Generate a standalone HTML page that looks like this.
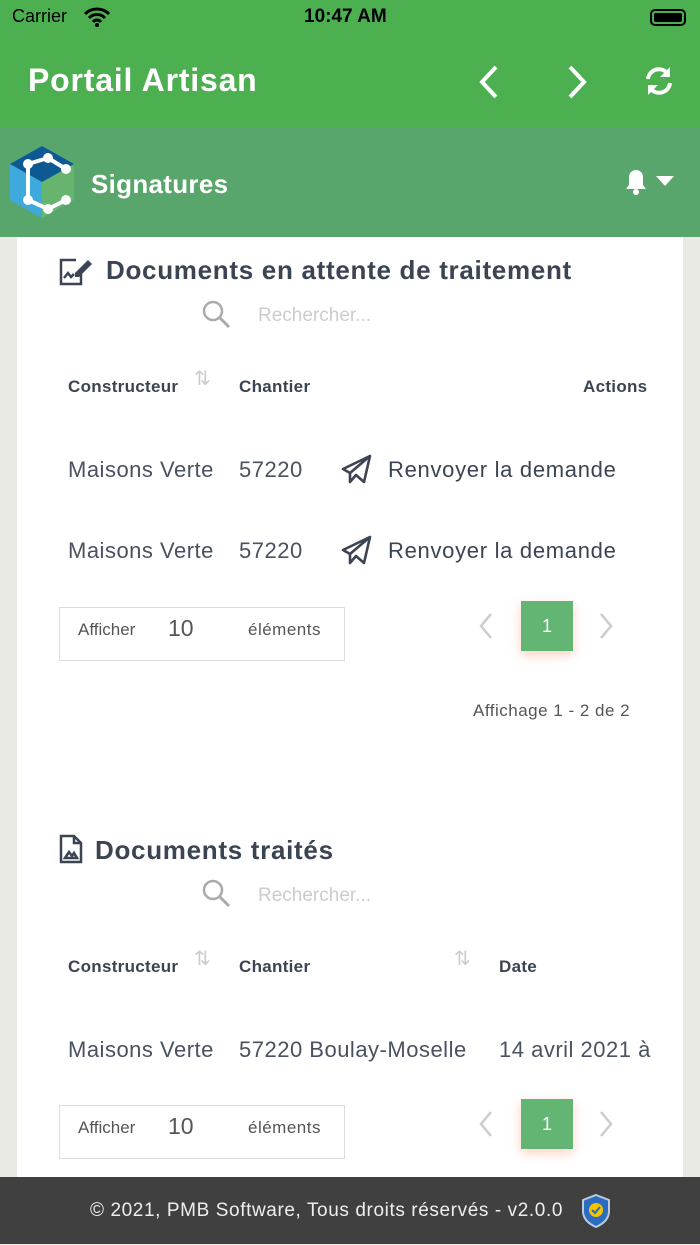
<!DOCTYPE html>
<html><head><meta charset="utf-8"><style>
*{margin:0;padding:0;box-sizing:border-box}
body{width:700px;height:1244px;overflow:hidden;position:relative;font-family:"Liberation Sans",sans-serif;background:#e9eae3;color:#3b4452}
.a{position:absolute;white-space:nowrap}
.hd{left:0;top:0;width:700px;height:128px;background:#4caf50}
.sub{left:0;top:128px;width:700px;height:109px;background:#58a66c}
.panel{left:17px;top:237px;width:666px;height:940px;background:#fff}
.th{font-size:17px;font-weight:bold;color:#3b4452;letter-spacing:0.3px}
.td{font-size:22px;color:#4a5160;letter-spacing:0.5px}
.box{border:1.5px solid #ddd;background:#fff}
.pg{width:52px;height:50px;background:#63b573;color:#fff;font-size:18px;text-align:center;line-height:50px;box-shadow:0 4px 10px rgba(255,120,80,.35)}
.foot{left:0;top:1177px;width:700px;height:67px;background:#404040;color:#eee;font-size:19px;line-height:68px}
</style></head><body>
<div class="a hd"></div>
<div class="a" style="left:12px;top:6px;color:#000;font-size:18px">Carrier</div>
<svg class="a" style="left:84px;top:7px" width="26" height="20" viewBox="0 0 26 20"><path d="M1 7a17 17 0 0 1 24 0M5 11a11 11 0 0 1 16 0M9 15a5 5 0 0 1 8 0" stroke="#000" stroke-width="3" fill="none"/><circle cx="13" cy="18" r="2"/></svg>
<div class="a" style="left:304px;top:6px;color:#000;font-size:19px;font-weight:bold">10:47 AM</div>
<div class="a" style="left:650px;top:9px;width:36px;height:17px;border:2px solid #000;border-radius:5px"><div style="margin:2px;height:9px;background:#000;border-radius:2px"></div></div>
<div class="a" style="left:28px;top:62px;color:#fff;font-size:32px;font-weight:bold;letter-spacing:0.8px">Portail Artisan</div>
<svg class="a" style="left:474px;top:64px" width="130" height="36"><path d="M22 3L8 18l14 15" stroke="#fff" stroke-width="4" fill="none"/><path d="M96 3l14 15-14 15" stroke="#fff" stroke-width="4" fill="none"/></svg>
<svg class="a" style="left:643px;top:64px" width="32" height="34" viewBox="0 0 32 34"><path d="M5 15a11 11 0 0 1 20-5M27 19a11 11 0 0 1-20 5" stroke="#fff" stroke-width="4" fill="none"/><path d="M27 3v10h-10zM5 31v-10h10z" fill="#fff"/></svg>
<div class="a sub"></div>
<svg class="a" style="left:8px;top:144px" width="68" height="76" viewBox="0 0 68 76"><path d="M34 2L66 20v36L34 74 2 56V20z" fill="#3da9dd"/><path d="M34 38L66 20v36L34 74z" fill="#66b46e"/><path d="M34 2L66 20 34 38 2 20z" fill="#0d5a92"/><path d="M40 14L20 20v36l20 9 18-9M40 14l18 11" stroke="#fff" stroke-width="4" fill="none"/><g fill="#fff"><circle cx="40" cy="14" r="5"/><circle cx="20" cy="20" r="5"/><circle cx="58" cy="25" r="5"/><circle cx="20" cy="56" r="5"/><circle cx="40" cy="65" r="5"/><circle cx="58" cy="56" r="5"/></g></svg>
<div class="a" style="left:91px;top:169px;color:#fff;font-size:26px;font-weight:bold;letter-spacing:0.3px">Signatures</div>
<svg class="a" style="left:620px;top:165px" width="56" height="30"><path d="M6 24h20l-3-4V12a7 7 0 0 0-14 0v8z" fill="#fff"/><circle cx="16" cy="27" r="3" fill="#fff"/><path d="M36 11h18l-9 10z" fill="#fff"/></svg>
<div class="a panel"></div>
<svg class="a" style="left:58px;top:256px" width="36" height="30" viewBox="0 0 36 30"><path d="M18 4H3v24h20V18M6 22l4-5 3 4 3-3" stroke="#3b4452" stroke-width="2.5" fill="none"/><path d="M30 4l4 4-13 13h-4v-4z" fill="#3b4452"/></svg>
<div class="a" style="left:106px;top:255px;font-size:26px;font-weight:bold;letter-spacing:0.7px">Documents en attente de traitement</div>
<svg class="a" style="left:200px;top:298px" width="32" height="32"><circle cx="13" cy="13" r="9" stroke="#aaa" stroke-width="2.5" fill="none"/><path d="M20 20l9 9" stroke="#aaa" stroke-width="3"/></svg>
<div class="a" style="left:258px;top:305px;font-size:19px;color:#ccc">Rechercher...</div>
<div class="a th" style="left:68px;top:377px">Constructeur</div>
<div class="a" style="left:194px;top:366px;color:#ccc;font-size:20px">⇅</div>
<div class="a th" style="left:239px;top:377px">Chantier</div>
<div class="a th" style="left:583px;top:377px">Actions</div>
<div class="a td" style="left:68px;top:457px">Maisons Verte</div><div class="a td" style="left:239px;top:457px">57220</div>
<div class="a td" style="left:68px;top:538px">Maisons Verte</div><div class="a td" style="left:239px;top:538px">57220</div>
<svg class="a" style="left:341px;top:453px" width="32" height="32" viewBox="0 0 32 32"><path d="M2 16L29 3l-6 26-8-7-6 7v-9zM9 20L29 3" stroke="#3b4452" stroke-width="2.6" fill="none" stroke-linejoin="round"/></svg>
<svg class="a" style="left:341px;top:534px" width="32" height="32" viewBox="0 0 32 32"><path d="M2 16L29 3l-6 26-8-7-6 7v-9zM9 20L29 3" stroke="#3b4452" stroke-width="2.6" fill="none" stroke-linejoin="round"/></svg>
<div class="a" style="left:388px;top:457px;font-size:22px;color:#3b4452;letter-spacing:0.7px">Renvoyer la demande</div>
<div class="a" style="left:388px;top:538px;font-size:22px;color:#3b4452;letter-spacing:0.7px">Renvoyer la demande</div>
<div class="a box" style="left:59px;top:607px;width:286px;height:54px"></div>
<div class="a" style="left:78px;top:620px;font-size:17px;color:#555">Afficher</div>
<div class="a" style="left:168px;top:615px;font-size:23px;color:#555">10</div>
<div class="a" style="left:248px;top:620px;font-size:17px;color:#555;letter-spacing:0.5px">éléments</div>
<svg class="a" style="left:476px;top:612px" width="140" height="28"><path d="M15 2L5 14l10 12M125 2l10 12-10 12" stroke="#ccc" stroke-width="2.5" fill="none"/></svg>
<div class="a pg" style="left:521px;top:601px">1</div>
<div class="a" style="left:473px;top:701px;font-size:17px;color:#555;letter-spacing:0.5px">Affichage 1 - 2 de 2</div>
<svg class="a" style="left:58px;top:834px" width="26" height="30" viewBox="0 0 26 30"><path d="M3 2h13l7 7v19H3zM16 2v7h7M7 24l4-6 3 4 2-3 3 5z" stroke="#3b4452" stroke-width="2.5" fill="none"/></svg>
<div class="a" style="left:95px;top:835px;font-size:26px;font-weight:bold;letter-spacing:0.7px">Documents traités</div>
<svg class="a" style="left:200px;top:877px" width="32" height="32"><circle cx="13" cy="13" r="9" stroke="#aaa" stroke-width="2.5" fill="none"/><path d="M20 20l9 9" stroke="#aaa" stroke-width="3"/></svg>
<div class="a" style="left:258px;top:885px;font-size:19px;color:#ccc">Rechercher...</div>
<div class="a th" style="left:68px;top:957px">Constructeur</div>
<div class="a" style="left:194px;top:946px;color:#ccc;font-size:20px">⇅</div>
<div class="a th" style="left:239px;top:957px">Chantier</div>
<div class="a" style="left:454px;top:946px;color:#ccc;font-size:20px">⇅</div>
<div class="a th" style="left:499px;top:957px">Date</div>
<div class="a td" style="left:68px;top:1037px">Maisons Verte</div>
<div class="a td" style="left:239px;top:1037px">57220 Boulay-Moselle</div>
<div class="a td" style="left:499px;top:1037px;width:159px;overflow:hidden">14 avril 2021 à</div>
<div class="a box" style="left:59px;top:1105px;width:286px;height:54px"></div>
<div class="a" style="left:78px;top:1118px;font-size:17px;color:#555">Afficher</div>
<div class="a" style="left:168px;top:1113px;font-size:23px;color:#555">10</div>
<div class="a" style="left:248px;top:1118px;font-size:17px;color:#555;letter-spacing:0.5px">éléments</div>
<svg class="a" style="left:476px;top:1110px" width="140" height="28"><path d="M15 2L5 14l10 12M125 2l10 12-10 12" stroke="#ccc" stroke-width="2.5" fill="none"/></svg>
<div class="a pg" style="left:521px;top:1099px">1</div>
<div class="a foot"><span style="position:absolute;left:90px;letter-spacing:0.6px">© 2021, PMB Software, Tous droits réservés - v2.0.0</span></div>
<svg class="a" style="left:580px;top:1193px" width="32" height="36" viewBox="0 0 32 36"><path d="M16 2l13 5v11c0 8-6 13-13 16C9 31 3 26 3 18V7z" fill="#2a6cc0" stroke="#bcd" stroke-width="2"/><circle cx="16" cy="17" r="7" fill="#f5c400"/><path d="M12 17l3 3 5-6" stroke="#2a6cc0" stroke-width="2" fill="none"/></svg>
</body></html>
